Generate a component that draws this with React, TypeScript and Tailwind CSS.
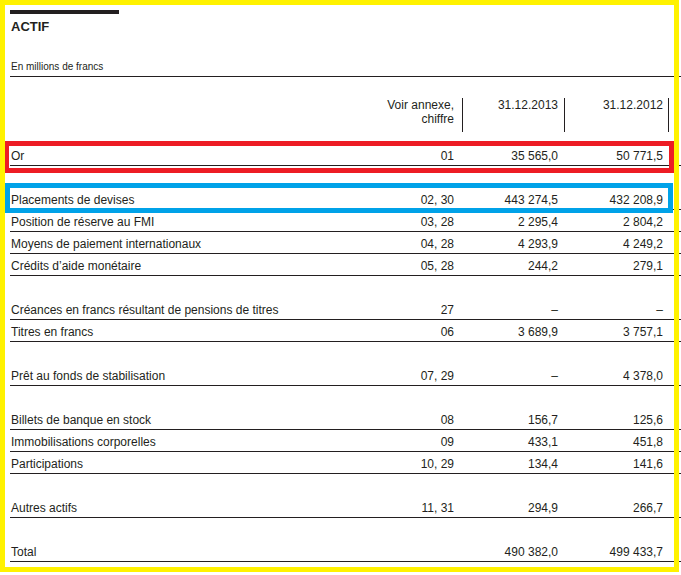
const rows: (null | { label: string; note: string; y13: string; y12: string })[] = [
  { label: 'Or', note: '01', y13: '35 565,0', y12: '50 771,5' },
  null,
  { label: 'Placements de devises', note: '02, 30', y13: '443 274,5', y12: '432 208,9' },
  { label: 'Position de réserve au FMI', note: '03, 28', y13: '2 295,4', y12: '2 804,2' },
  { label: 'Moyens de paiement internationaux', note: '04, 28', y13: '4 293,9', y12: '4 249,2' },
  { label: 'Crédits d’aide monétaire', note: '05, 28', y13: '244,2', y12: '279,1' },
  null,
  { label: 'Créances en francs résultant de pensions de titres', note: '27', y13: '–', y12: '–' },
  { label: 'Titres en francs', note: '06', y13: '3 689,9', y12: '3 757,1' },
  null,
  { label: 'Prêt au fonds de stabilisation', note: '07, 29', y13: '–', y12: '4 378,0' },
  null,
  { label: 'Billets de banque en stock', note: '08', y13: '156,7', y12: '125,6' },
  { label: 'Immobilisations corporelles', note: '09', y13: '433,1', y12: '451,8' },
  { label: 'Participations', note: '10, 29', y13: '134,4', y12: '141,6' },
  null,
  { label: 'Autres actifs', note: '11, 31', y13: '294,9', y12: '266,7' },
  null,
  { label: 'Total', note: '', y13: '490 382,0', y12: '499 433,7' },
];

const grid = 'grid grid-cols-[1fr_100px_102px_104px_12px]';

export default function App() {
  return (
    <div className="relative w-[681px] h-[575px] overflow-hidden bg-white pl-[10px] text-[#231f20] font-['Liberation_Sans',Arial,sans-serif]">
      {/* Title */}
      <div className="pt-[10px]">
        <div className="w-[109px] h-[4px] bg-[#231f20]" />
      </div>
      <h1 className="mt-[5px] pl-[1px] text-[13px] leading-[16px] font-bold">ACTIF</h1>
      <div className="mt-[26px] pb-[3px] pl-[1px] text-[10px] leading-[12px] border-b border-[#231f20]">
        En millions de francs
      </div>

      {/* Column headers */}
      <div className={`${grid} h-[67px] text-[12px] leading-[14px]`}>
        <div />
        <div className="mt-[21px] h-[34px] border-r border-[#231f20] pr-[8px] text-right">
          Voir annexe,
          <br />
          chiffre
        </div>
        <div className="mt-[21px] h-[34px] border-r border-[#231f20] pr-[6px] text-right">31.12.2013</div>
        <div className="mt-[21px] h-[34px] border-r border-[#231f20] pr-[5px] text-right">31.12.2012</div>
        <div />
      </div>

      {/* Rows */}
      {rows.map((row, i) =>
        row ? (
          <div
            key={i}
            className={`${grid} h-[22px] items-end pb-[2px] border-b border-[#231f20] text-[12px] leading-[14px] whitespace-nowrap`}
          >
            <div className="pl-[1px]">{row.label}</div>
            <div className="pr-[9px] text-right">{row.note}</div>
            <div className="pr-[7px] text-right">{row.y13}</div>
            <div className="pr-[6px] text-right">{row.y12}</div>
            <div />
          </div>
        ) : (
          <div key={i} className="h-[22px]" />
        ),
      )}

      {/* Highlight frames drawn over the table */}
      <div className="absolute left-[4px] top-[141px] w-[670px] h-[32px] border-[5px] border-[#ed1c24] pointer-events-none" />
      <div className="absolute left-[5px] top-[183px] w-[668px] h-[30px] border-[5px] border-[#00a2e8] pointer-events-none" />
      <div className="absolute left-0 top-0 w-[679px] h-[572px] border-[5px] border-[#fff200] pointer-events-none" />
    </div>
  );
}
